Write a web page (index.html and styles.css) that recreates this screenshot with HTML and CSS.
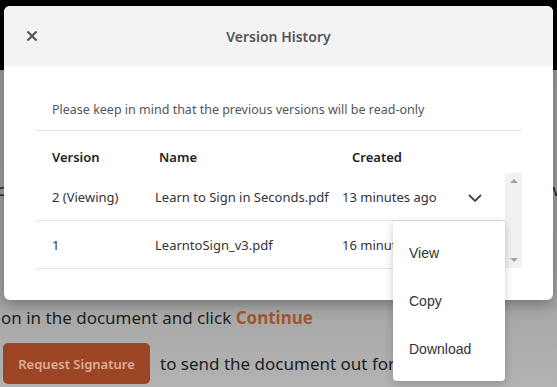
FILE: index.html
```html
<!DOCTYPE html>
<html lang="en">
<head>
    <meta charset="UTF-8">
    <meta name="viewport" content="width=device-width, initial-scale=1.0">
    <title>Version History</title>
    <link rel="stylesheet" href="styles.css">
</head>
<body>

    <!-- page behind the modal, already dimmed -->
    <div class="page">
        <div class="topbar"></div>
        <div class="page-body">
            <p class="page-line line-mid"><span>c</span><span>w</span></p>
            <p class="page-line line-continue">on in the document and click <b>Continue</b></p>
            <div class="page-line line-request">
                <button class="request-btn">Request Signature</button>
                <span>to send the document out for</span>
            </div>
        </div>
    </div>

    <div class="dialog">
        <div class="dialog-header">
            <button class="close-btn" aria-label="Close">
                <svg width="12" height="12" viewBox="0 0 12 12">
                    <path d="M1.5 1.5 L10.5 10.5 M10.5 1.5 L1.5 10.5" stroke="#555" stroke-width="2.2" fill="none"/>
                </svg>
            </button>
            <h2>Version History</h2>
        </div>
        <div class="dialog-body">
            <p class="note">Please keep in mind that the previous versions will be read-only</p>
            <div class="versions">
                <div class="row head">
                    <div class="col-version">Version</div>
                    <div class="col-name">Name</div>
                    <div class="col-created">Created</div>
                </div>
                <div class="rows-wrap">
                    <div class="rows">
                        <div class="row">
                            <div class="col-version">2 (Viewing)</div>
                            <div class="col-name">Learn to Sign in Seconds.pdf</div>
                            <div class="col-created">13 minutes ago</div>
                            <div class="col-action">
                                <svg width="16" height="10" viewBox="0 0 16 10">
                                    <path d="M2 2 L8 8 L14 2" stroke="#444" stroke-width="1.8" fill="none"/>
                                </svg>
                            </div>
                        </div>
                        <div class="row">
                            <div class="col-version">1</div>
                            <div class="col-name">LearntoSign_v3.pdf</div>
                            <div class="col-created">16 minutes ago</div>
                            <div class="col-action"></div>
                        </div>
                    </div>
                    <div class="scrollbar">
                        <span class="arrow-up"></span>
                        <span class="arrow-down"></span>
                    </div>
                </div>
            </div>
        </div>
    </div>

    <ul class="menu">
        <li>View</li>
        <li>Copy</li>
        <li>Download</li>
    </ul>

</body>
</html>
```

FILE: styles.css
```css
body {
    margin: 0;
    font-family: "Noto Sans", "Open Sans", sans-serif;
    width: 557px;
    height: 387px;
    overflow: hidden;
    position: relative;
}

/* Page behind the modal (colours as seen through the backdrop) */
.page {
    height: 387px;
    display: flex;
    flex-direction: column;
}

.topbar {
    height: 70px;
    background: #000;
}

.page-body {
    flex: 1;
    color: #1e1e1e;
    font-size: 17px;
    background: linear-gradient(#9b9b9b 0%, #a0a0a0 65%, #acacac 85%, #b2b2b2 100%);
}

.page-line {
    margin: 0;
}

.line-mid {
    display: flex;
    justify-content: space-between;
    padding-top: 108px;
    height: 24px;
    margin: 0 -3px;
}

.line-continue {
    padding-top: 104px;
    padding-left: 1px;
}

.line-continue b {
    color: #a0562c;
}

.line-request {
    display: flex;
    align-items: center;
    gap: 10px;
    margin-top: 14px;
    padding-left: 3px;
}

.request-btn {
    width: 147px;
    height: 41px;
    background: #9b4524;
    color: #dcae98;
    border: none;
    border-radius: 5px;
    font-family: inherit;
    font-size: 13px;
    font-weight: 600;
}

/* Modal */
.dialog {
    position: absolute;
    left: 4px;
    top: 6px;
    width: 549px;
    height: 294px;
    background: #fff;
    border-radius: 6px;
    overflow: hidden;
    box-shadow: 0 4px 14px rgba(0, 0, 0, 0.3);
}

.dialog-header {
    height: 60px;
    background: #f3f3f3;
    display: flex;
    align-items: center;
    position: relative;
}

.dialog-header h2 {
    flex: 1;
    margin: 0;
    text-align: center;
    font-size: 14px;
    font-weight: 600;
    color: #555;
}

.close-btn {
    position: absolute;
    left: 22px;
    top: 24px;
    background: none;
    border: none;
    padding: 0;
    width: 12px;
    height: 12px;
}

.dialog-body {
    padding: 35px 31px 0 32px;
}

.note {
    margin: 0;
    padding: 0 0 12px 16px;
    font-size: 12.5px;
    color: #555;
    border-bottom: 1px solid #e4e4e4;
}

.versions {
    font-size: 13px;
    color: #333;
}

.row {
    display: flex;
    align-items: center;
    height: 47px;
    border-bottom: 1px solid #e4e4e4;
}

.row.head {
    height: 42px;
    padding-top: 10px;
    box-sizing: border-box;
    border-bottom: none;
    font-weight: 600;
    color: #222;
}

.col-version {
    width: 103px;
    padding-left: 16px;
    box-sizing: border-box;
}

.col-name {
    width: 187px;
    padding-left: 16px;
    box-sizing: border-box;
    white-space: nowrap;
}

.col-created {
    width: 130px;
    padding-left: 16px;
    box-sizing: border-box;
    white-space: nowrap;
}

.head .col-name {
    padding-left: 20px;
}

.head .col-created {
    padding-left: 26px;
}

.col-action {
    flex: 1;
    display: flex;
    padding-left: 11px;
    padding-top: 3px;
}

.rows-wrap {
    display: flex;
    height: 95px;
}

.rows {
    flex: 1;
}

.scrollbar {
    width: 17px;
    background: #f1f1f1;
    display: flex;
    flex-direction: column;
    justify-content: space-between;
    align-items: center;
    padding: 6px 0;
    box-sizing: border-box;
}

.arrow-up,
.arrow-down {
    width: 0;
    height: 0;
    border-left: 4px solid transparent;
    border-right: 4px solid transparent;
}

.arrow-up {
    border-bottom: 4px solid #a3a3a3;
}

.arrow-down {
    border-top: 4px solid #a3a3a3;
}

/* Dropdown menu */
.menu {
    position: absolute;
    left: 393px;
    top: 221px;
    width: 112px;
    margin: 0;
    padding: 8px 0;
    list-style: none;
    background: #fff;
    border-radius: 4px;
    box-shadow: 0 2px 8px rgba(0, 0, 0, 0.2);
    font-family: "Liberation Sans", Arial, sans-serif;
    font-size: 14px;
    color: #333;
}

.menu li {
    height: 48px;
    line-height: 48px;
    padding-left: 16px;
}
```
